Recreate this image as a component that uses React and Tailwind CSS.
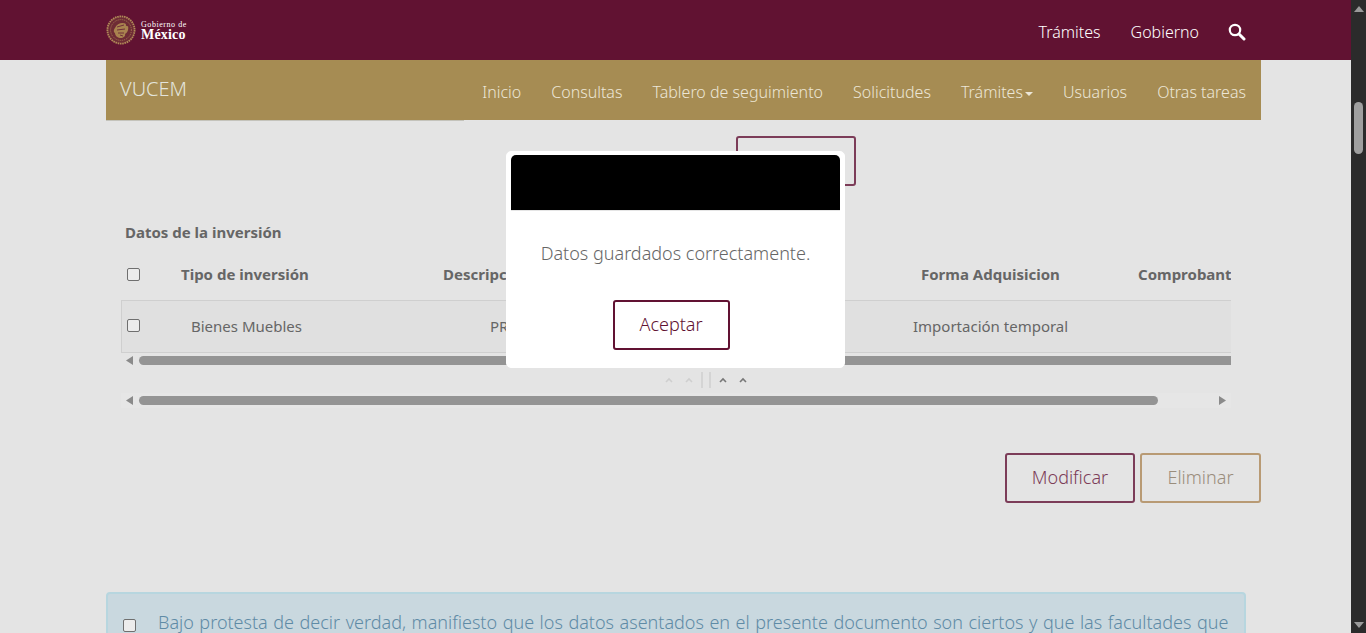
import React from "react";

const Chev = ({ c }) => (
  <svg width="8" height="6" viewBox="0 0 8 6" className={c}>
    <path d="M1 5 L4 2 L7 5" fill="none" stroke="currentColor" strokeWidth="1.6" />
  </svg>
);

const Tri = ({ dir, c }) => {
  const d = { left: "M7 0 L7 9 L0 4.5 Z", right: "M0 0 L0 9 L7 4.5 Z" }[dir];
  return (
    <svg width="7" height="9" viewBox="0 0 7 9" className={c}>
      <path d={d} fill="currentColor" />
    </svg>
  );
};

const Box = ({ c = "" }) => (
  <span className={`block w-[13px] h-[13px] rounded-[2px] border border-[#6f6f6f] bg-[#ececec] ${c}`} />
);

const Seal = () => (
  <svg width="30" height="30" viewBox="0 0 30 30">
    <circle cx="15" cy="15" r="13.6" fill="#6e2b35" stroke="#b08a58" strokeWidth="1.8" strokeDasharray="1.6 0.7" />
    <circle cx="15" cy="15" r="10.4" fill="none" stroke="#a67c52" strokeWidth="1" strokeDasharray="1 1" />
    <path d="M9 13 C11 8 17 7 20 9 C19 10 21 12 22 11 C23 15 21 18 19 19 C20 21 17 23 15 23 C12 23 9 21 9 18 C7 17 8 14 9 13 Z" fill="#a9834f" />
    <path d="M11 12 L18 10 M11 15 L19 14 M12 18 L18 18 M14 20 L17 21" stroke="#70303a" strokeWidth="1" />
  </svg>
);

export default function App() {
  return (
    <div className="h-[633px] w-[1366px] overflow-hidden flex bg-[#e4e4e4] font-['Noto_Sans','Open_Sans',sans-serif] text-[#666]">
      <div className="relative w-[1351px] h-full overflow-hidden">
        <header className="h-[60px] bg-[#611232] flex items-center pl-[106px] pr-[105px]">
          <Seal />
          <div className="ml-[5px] flex flex-col text-white font-['Liberation_Serif',serif]">
            <span className="text-[8px] leading-[9px] tracking-[0.55px]">Gobierno de</span>
            <span className="text-[14px] leading-[12px] font-bold tracking-[0.2px]">México</span>
          </div>
          <nav className="ml-auto flex items-center text-white text-[16px] font-light">
            <span className="mt-[3px]">Trámites</span>
            <span className="ml-[30px] mt-[3px]">Gobierno</span>
            <svg width="18" height="18" viewBox="0 0 18 18" className="ml-[29px] mt-[3px]">
              <circle cx="7" cy="7" r="5.2" fill="none" stroke="white" strokeWidth="2.2" />
              <path d="M11 11 L16 16" stroke="white" strokeWidth="3" strokeLinecap="round" />
            </svg>
          </nav>
        </header>

        <div className="ml-[106px] w-[1155px] h-[60px] bg-[#a68c53] flex items-start pl-[14px] pr-[15px] text-[#ece6d6]">
          <span className="text-[20px] leading-[28px] font-light mt-[15px] text-[#e3e4dc]">VUCEM</span>
          <nav className="ml-auto flex gap-[30px] text-[16px] leading-[22px] mt-[21px] font-light">
            <span>Inicio</span>
            <span>Consultas</span>
            <span>Tablero de seguimiento</span>
            <span>Solicitudes</span>
            <span className="flex items-center">
              Trámites
              <span className="ml-[2px] mt-[3px] w-0 h-0 border-x-[4px] border-x-transparent border-t-[4px] border-t-[#ece6d6]" />
            </span>
            <span>Usuarios</span>
            <span>Otras tareas</span>
          </nav>
        </div>
        <div className="ml-[106px] w-[358px] h-px bg-[#c4c3bb]" />

        <main className="ml-[106px] w-[1155px]">
          <div className="mt-[15px] ml-[630px] w-[120px] h-[50px] rounded-[3px] border-2 border-[#7c3c58]" />

          <h3 className="ml-[19px] mt-[35px] text-[15px] leading-[22px] font-bold">Datos de la inversión</h3>

          <div className="ml-[15px] w-[1110px] mt-[12px] overflow-hidden">
            <div className="w-[1300px] h-[45px] flex items-center pb-[6px] text-[15px] font-bold">
              <Box c="ml-[6px]" />
              <span className="ml-[41px] w-[262px] shrink-0">Tipo de inversión</span>
              <span className="w-[478px] shrink-0">Descripción</span>
              <span className="w-[217px] shrink-0">Forma Adquisicion</span>
              <span className="shrink-0">Comprobante</span>
            </div>
            <div className="w-[1300px] h-[53px] flex items-center text-[15px] bg-[#e0e0e0] border-y border-[#cfcfcf] border-l">
              <Box c="ml-[5px] mb-[2px]" />
              <span className="ml-[51px] w-[299px] shrink-0">Bienes Muebles</span>
              <span className="w-[423px] shrink-0">PRUEBA</span>
              <span className="shrink-0">Importación temporal</span>
            </div>
            <div className="h-[15px] flex items-center">
              <Tri dir="left" c="ml-[5px] text-[#8a8a8a]" />
              <span className="ml-[6px] flex-1 h-[9px] rounded-l-full bg-[#949494]" />
            </div>
          </div>

          <div className="ml-[15px] w-[1110px] h-[25px] flex items-center justify-center gap-[12px] pl-[60px] pb-[1px]">
            <Chev c="text-[#cfcfcf]" />
            <Chev c="text-[#cfcfcf]" />
            <span className="flex gap-[6px] -mx-[4px]">
              <span className="block w-[2px] h-[16px] bg-[#d4d4d4]" />
              <span className="block w-[2px] h-[16px] bg-[#d4d4d4]" />
            </span>
            <Chev c="text-[#777]" />
            <Chev c="text-[#777]" />
          </div>

          <div className="ml-[15px] w-[1110px] h-[15px] flex items-center bg-[#e6e6e6]">
            <Tri dir="left" c="ml-[5px] text-[#8a8a8a]" />
            <span className="ml-[6px] w-[1019px] h-[9px] rounded-full bg-[#949494]" />
            <Tri dir="right" c="ml-auto mr-[5px] text-[#8a8a8a]" />
          </div>

          <div className="mt-[45px] flex justify-end gap-[5px]">
            <button className="w-[130px] h-[50px] pb-[2px] rounded-[3px] border-2 border-[#7c3c58] text-[18px] font-light text-[#7c3c58]">Modificar</button>
            <button className="w-[121px] h-[50px] pb-[2px] rounded-[3px] border-2 border-[#b89a74] text-[18px] font-light text-[#9a8d7c]">Eliminar</button>
          </div>

          <div className="mt-[89px] w-[1140px] h-[80px] rounded-[4px] border-2 border-[#b7d6df] bg-[#c9d8df] flex items-start pl-[15px] pt-[15px] text-[#5f8ba6]">
            <Box c="mt-[10px] shrink-0" />
            <p className="ml-[22px] text-[18px] leading-[26px] font-light whitespace-nowrap [word-spacing:0.85px]">
              Bajo protesta de decir verdad, manifiesto que los datos asentados en el presente documento son ciertos y que las facultades que
            </p>
          </div>
        </main>

        <div className="absolute left-[506px] top-[151px] w-[339px] h-[217px] bg-white rounded-[5px] px-[4px] pt-[3px] border border-white">
          <div className="h-[56px] bg-black rounded-t-[5px] border-b border-[#e5e5e5]" />
          <p className="mt-[29px] text-center text-[18px] leading-[26px] font-light text-[#666]">Datos guardados correctamente.</p>
          <div className="mt-[34px] flex justify-center pr-[9px]">
            <button className="w-[117px] h-[50px] pb-[2px] rounded-[3px] border-2 border-[#611232] text-[18px] font-light text-[#611232]">Aceptar</button>
          </div>
        </div>
      </div>

      <aside className="w-[15px] h-full bg-[#2b2b2b] relative">
        <span className="absolute left-[3px] top-[6px] w-0 h-0 border-x-[5px] border-x-transparent border-b-[6px] border-b-[#9a9a9a]" />
        <span className="absolute left-[3px] top-[102px] w-[9px] h-[52px] rounded-full bg-[#9f9f9f]" />
        <span className="absolute left-[3px] bottom-[5px] w-0 h-0 border-x-[5px] border-x-transparent border-t-[6px] border-t-[#9a9a9a]" />
      </aside>
    </div>
  );
}
